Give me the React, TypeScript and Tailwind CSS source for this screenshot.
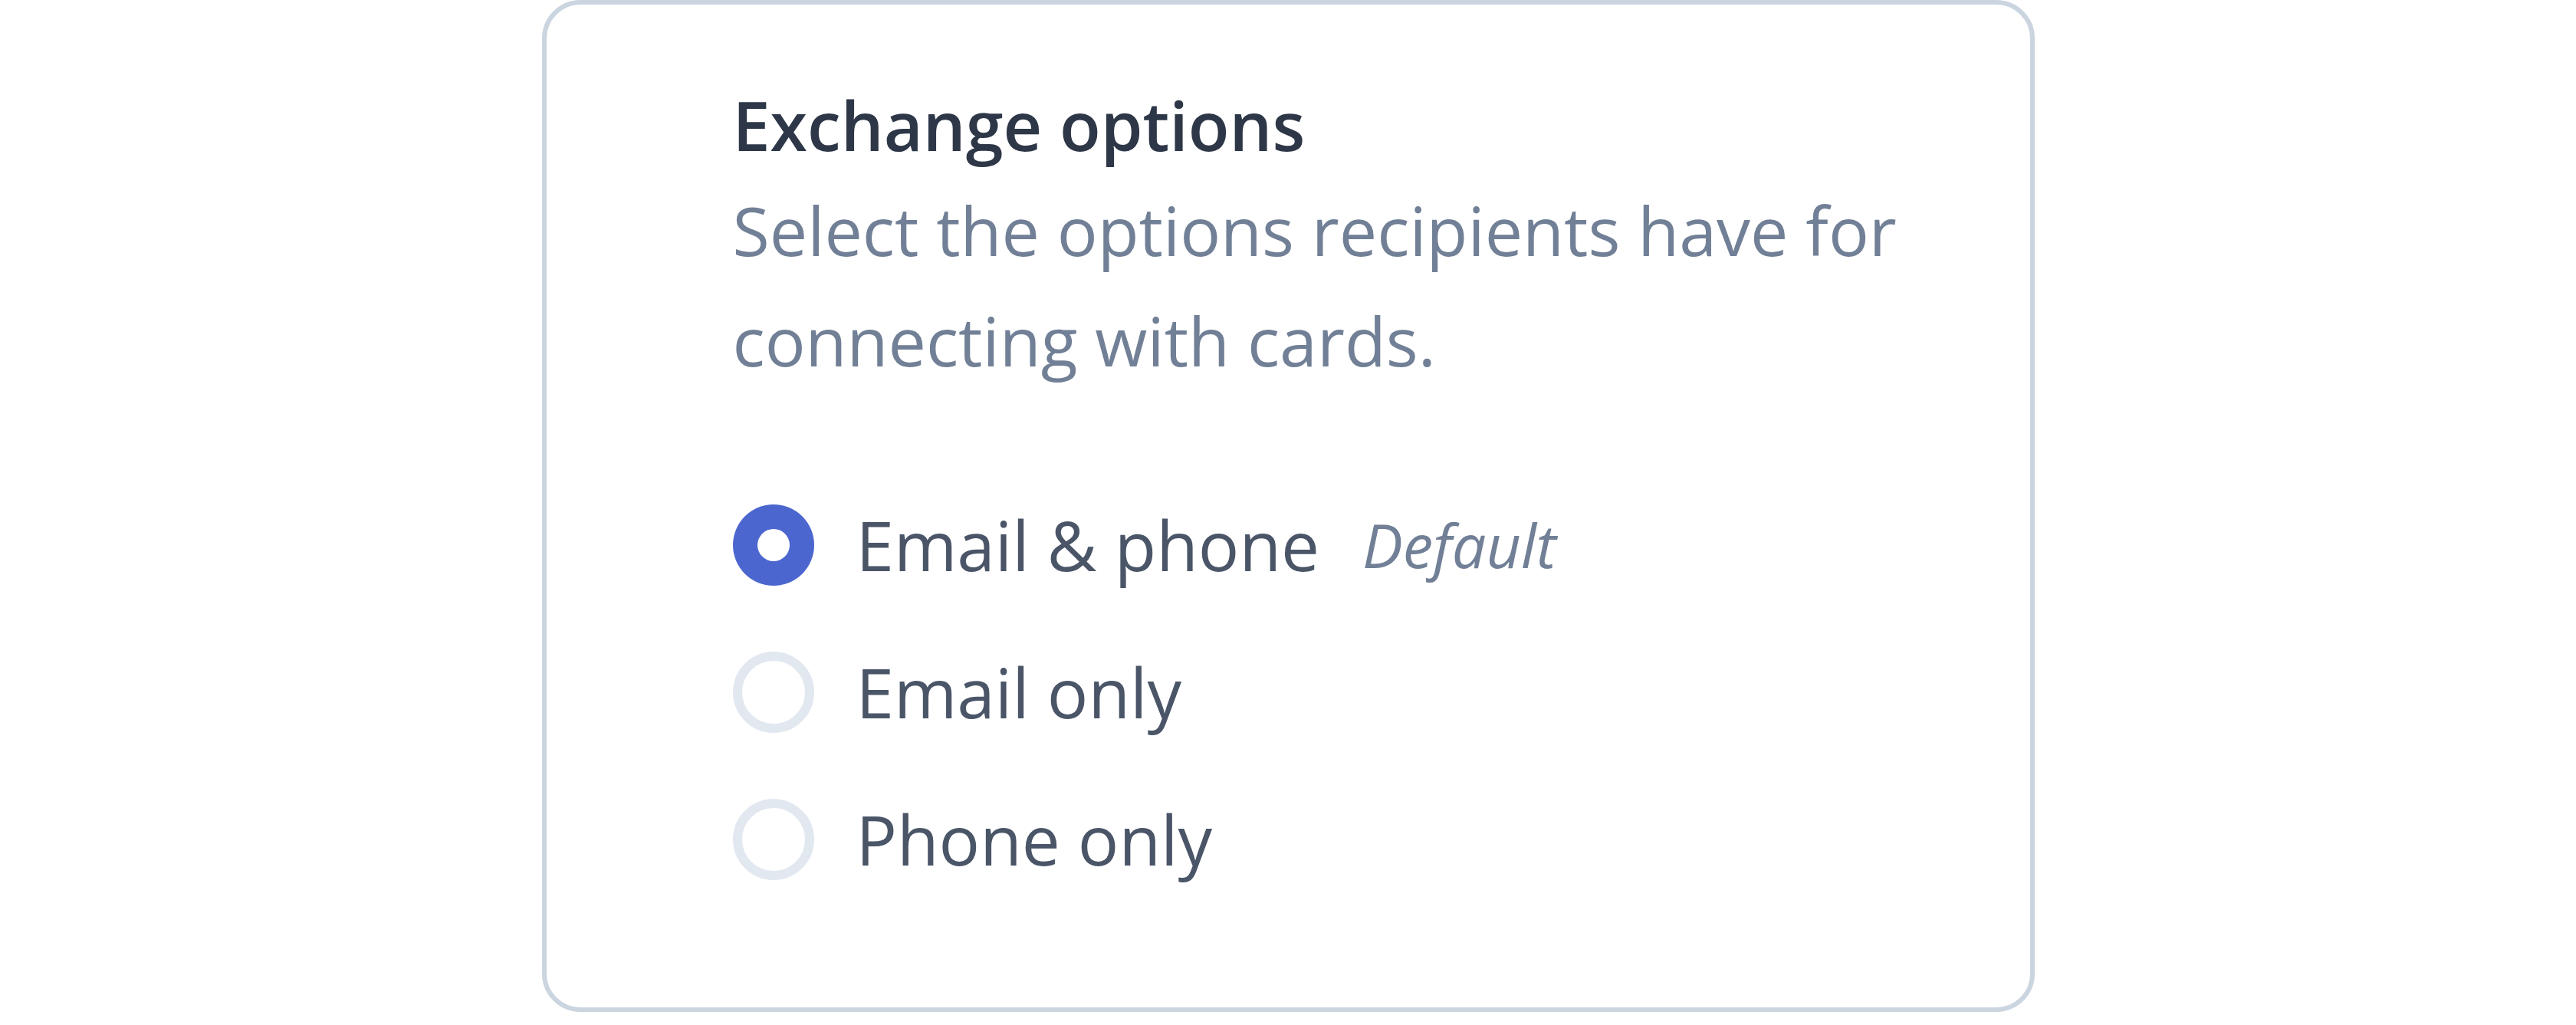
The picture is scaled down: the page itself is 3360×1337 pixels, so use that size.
import { useState } from 'react'

const OPTIONS = [
    { id: 'both', label: 'Email & phone', tag: 'Default' },
    { id: 'email', label: 'Email only' },
    { id: 'phone', label: 'Phone only' },
]

export default function App() {
    const [selected, setSelected] = useState('both')

    return (
        <div className="min-h-screen bg-white flex justify-center font-['Open_Sans',sans-serif]">
            <div className="w-[1947px] h-fit bg-white border-[6px] border-[#cbd5e0] rounded-[50px] pl-[243px] pr-[100px] pt-[93px] pb-[123px]">
                {/* Heading */}
                <h2 className="text-[88px] leading-[129px] font-semibold text-[#2d3748]">
                    Exchange options
                </h2>
                <p className="text-[88px] leading-[144px] text-[#718096]">
                    Select the options recipients have for connecting with cards.
                </p>

                {/* Radio list */}
                <div className="mt-[99px] flex flex-col">
                    {OPTIONS.map((opt) => {
                        const checked = selected === opt.id
                        return (
                            <label
                                key={opt.id}
                                className="h-[192px] flex items-center cursor-pointer"
                                onClick={() => setSelected(opt.id)}
                            >
                                {checked ? (
                                    <span className="w-[106px] h-[106px] rounded-full bg-[#4c66cf] flex items-center justify-center shrink-0">
                                        <span className="w-[42px] h-[42px] rounded-full bg-white" />
                                    </span>
                                ) : (
                                    <span className="w-[106px] h-[106px] rounded-full border-[12px] border-[#e2e8f0] bg-white shrink-0" />
                                )}
                                <span className="ml-[55px] text-[89px] leading-[190px] text-[#4a5568]">
                                    {opt.label}
                                </span>
                                {opt.tag && (
                                    <span className="ml-[56px] text-[79px] italic text-[#718096]">
                                        {opt.tag}
                                    </span>
                                )}
                            </label>
                        )
                    })}
                </div>
            </div>
        </div>
    )
}
